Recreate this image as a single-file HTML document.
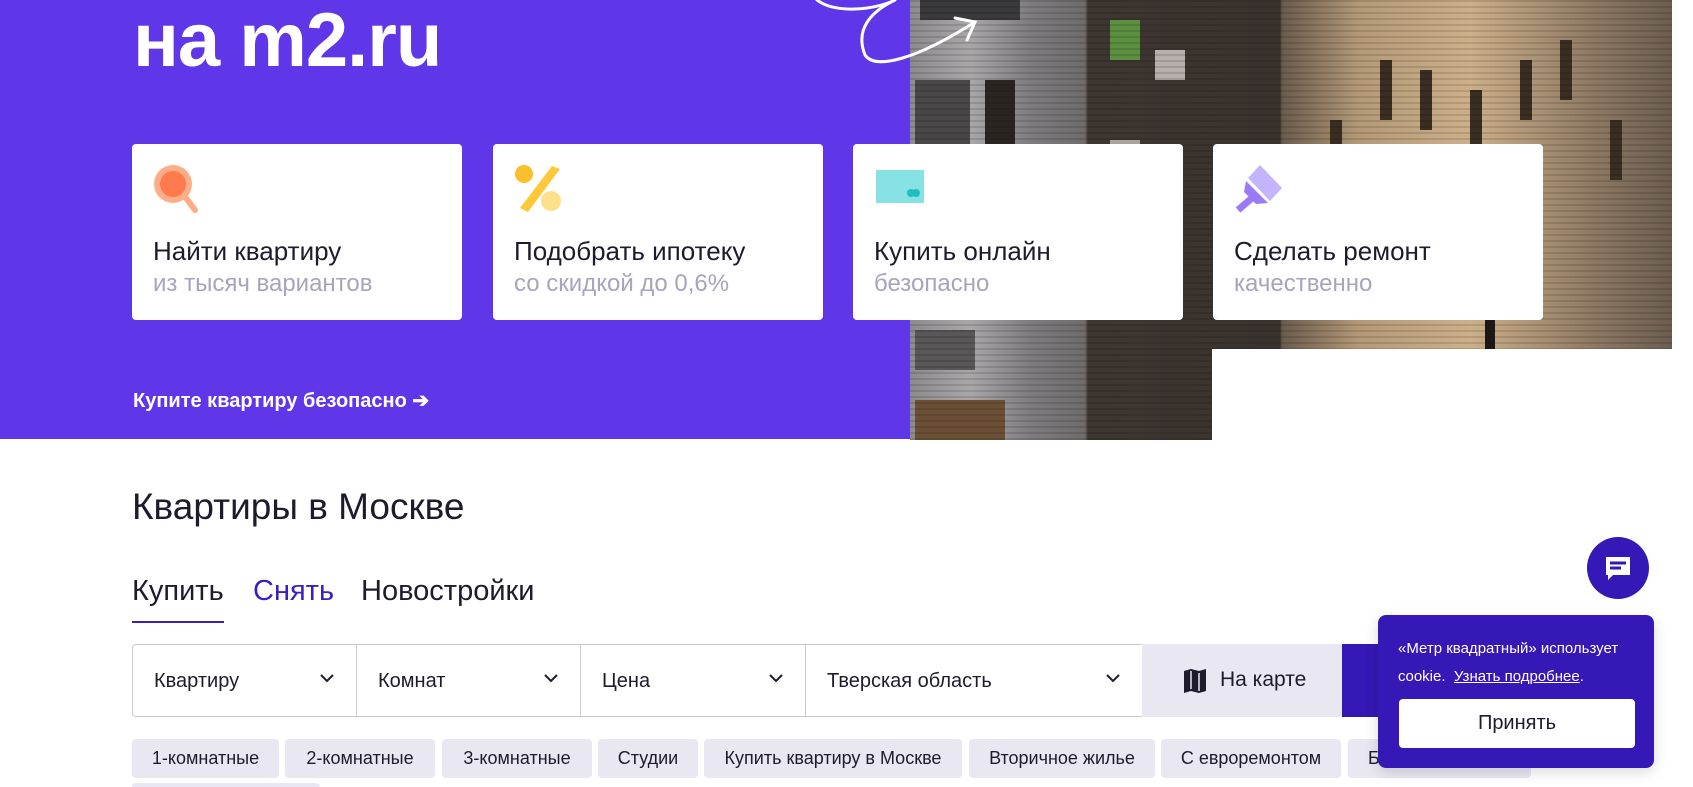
<!DOCTYPE html>
<html style="height:787px;overflow:hidden"><head><meta charset="utf-8">
<style>
*{margin:0;padding:0;box-sizing:border-box}
body{width:1693px;height:787px;overflow:hidden;background:#fff;font-family:"Liberation Sans","Noto Sans CJK SC",sans-serif;position:relative;color:#1d1b2c}
.abs{position:absolute}
.hero{left:0;top:0;width:910px;height:439px;background:#5f37e9}
.photo{left:910px;top:0;width:762px;height:440px;overflow:hidden;
background:
linear-gradient(90deg,#8c8a8d 0,#a9a7a8 60px,#7e7c7f 120px,#6f6b6b 175px,#3e3631 178px,#3a322d 370px,#6a5b4c 372px,#b49a78 450px,#cdb08a 560px,#8f7a64 680px,#6b5d50 762px)}
.photo:after{content:"";position:absolute;inset:0;background:repeating-linear-gradient(180deg,rgba(0,0,0,.12) 0 2px,transparent 2px 6px)}
.photo .win{position:absolute;background:#2b2522}
.white{left:1212px;top:349px;width:481px;height:100px;background:#fff}
.title{left:133px;top:-3px;font-size:76px;font-weight:bold;color:#fff;letter-spacing:-1px}
.card{top:144px;width:330px;height:176px;background:#fff;border-radius:4px}
.card .t{position:absolute;left:21px;top:92px;font-size:26px;color:#1d1b2c;white-space:nowrap}
.card .s{position:absolute;left:21px;top:126px;font-size:24px;color:#a8a4bb;white-space:nowrap}
.card svg{position:absolute;left:21px;top:20px}
.link{left:133px;top:388px;color:#fff;font-size:20px;font-weight:bold}
h2{position:absolute;left:132px;top:486px;font-size:37px;font-weight:normal;color:#1d1b2c}
.tab{top:575px;font-size:29px}
.field{top:644px;height:73px;border:1px solid #cac7dc;background:#fff;font-size:20px;color:#1d1b2c;padding:25px 0 0 21px}
.field svg{position:absolute;right:22px;top:29px}
.chip{top:739px;height:39px;background:#e9e7f2;border-radius:4px;font-size:18px;color:#1d1b2c;text-align:center;line-height:39px;white-space:nowrap;overflow:hidden}
</style></head><body>
<div class="abs hero"></div>
<div class="abs photo">
 <div class="win" style="left:10px;top:0;width:100px;height:20px;background:#3a3a3c"></div>
 <div class="win" style="left:5px;top:80px;width:55px;height:90px;background:#4a4749"></div>
 <div class="win" style="left:75px;top:80px;width:30px;height:90px"></div>
 <div class="win" style="left:5px;top:330px;width:60px;height:40px;background:#5a5758"></div>
 <div class="win" style="left:5px;top:400px;width:90px;height:40px;background:#6b5036"></div>
 <div class="win" style="left:200px;top:20px;width:30px;height:40px;background:#5c9040"></div>
 <div class="win" style="left:245px;top:50px;width:30px;height:30px;background:#b7b0ad"></div>
 <div class="win" style="left:200px;top:140px;width:30px;height:30px;background:#a9a3a0"></div>
 <div class="win" style="left:575px;top:160px;width:10px;height:280px;background:#1c1816"></div>
 <div class="win" style="left:470px;top:60px;width:12px;height:60px;background:#3a2d22"></div>
 <div class="win" style="left:510px;top:70px;width:12px;height:60px;background:#3a2d22"></div>
 <div class="win" style="left:650px;top:40px;width:12px;height:60px;background:#3a2d22"></div>
 <div class="win" style="left:700px;top:120px;width:12px;height:60px;background:#3a2d22"></div>
 <div class="win" style="left:420px;top:120px;width:12px;height:60px;background:#3a2d22"></div>
 <div class="win" style="left:560px;top:90px;width:12px;height:60px;background:#3a2d22"></div>
 <div class="win" style="left:610px;top:60px;width:12px;height:60px;background:#3a2d22"></div>
</div>
<div class="abs white"></div>
<svg class="abs" style="left:815px;top:0" width="170" height="75" viewBox="0 0 170 75"><path d="M2 0 C20 14 60 10 80 0 M80 0 C55 12 40 30 50 55 C60 70 100 60 160 22 M140 18 L160 22 L152 40" fill="none" stroke="#fff" stroke-width="3" stroke-linecap="round"/></svg>
<div class="abs title">на m2.ru</div>

<div class="abs card" style="left:132px"><svg width="52" height="50" viewBox="0 0 52 50"><path d="M30 30 L42 46" stroke="#ffad87" stroke-width="6" stroke-linecap="round"/><circle cx="20" cy="20" r="19" fill="#ffad87"/><circle cx="20" cy="20" r="13" fill="#ff7a4f"/></svg><div class="t">Найти квартиру</div><div class="s">из тысяч вариантов</div></div>
<div class="abs card" style="left:493px"><svg width="52" height="50" viewBox="0 0 52 50"><circle cx="10" cy="10" r="9" fill="#fbbf2c"/><circle cx="37" cy="37" r="10" fill="#ffe08a"/><path d="M38 2 L46 5 L14 48 L6 44 Z" fill="#fbc93a"/></svg><div class="t">Подобрать ипотеку</div><div class="s">со скидкой до 0,6%</div></div>
<div class="abs card" style="left:853px"><svg width="52" height="50" viewBox="0 0 52 50"><rect x="2" y="6" width="48" height="33" fill="#87e2e3"/><circle cx="37" cy="29" r="4" fill="#1fbfc0"/><circle cx="42" cy="29" r="4" fill="#1fbfc0"/></svg><div class="t">Купить онлайн</div><div class="s">безопасно</div></div>
<div class="abs card" style="left:1213px"><svg width="52" height="50" viewBox="0 0 52 50"><path d="M26 1 L48 24 L36 37 L14 14 Z" fill="#c3b4fd"/><path d="M12 17 L34 39 L22 40 L10 28 Z" fill="#9b7af7"/><path d="M18 34 L4 46" stroke="#9b7af7" stroke-width="7"/></svg><div class="t">Сделать ремонт</div><div class="s">качественно</div></div>

<div class="abs link">Купите квартиру безопасно ➔</div>

<h2>Квартиры в Москве</h2>
<div class="abs tab" style="left:132px">Купить</div>
<div class="abs tab" style="left:253px;color:#3a1fc4">Снять</div>
<div class="abs tab" style="left:361px">Новостройки</div>
<div class="abs" style="left:132px;top:621px;width:92px;height:2px;background:#3a1fb0"></div>

<div class="abs field" style="left:132px;width:225px;border-radius:4px 0 0 4px">Квартиру<svg width="14" height="9" viewBox="0 0 14 9"><path d="M1 1 L7 7 L13 1" fill="none" stroke="#1d1b2c" stroke-width="2"/></svg></div>
<div class="abs field" style="left:356px;width:225px">Комнат<svg width="14" height="9" viewBox="0 0 14 9"><path d="M1 1 L7 7 L13 1" fill="none" stroke="#1d1b2c" stroke-width="2"/></svg></div>
<div class="abs field" style="left:580px;width:226px">Цена<svg width="14" height="9" viewBox="0 0 14 9"><path d="M1 1 L7 7 L13 1" fill="none" stroke="#1d1b2c" stroke-width="2"/></svg></div>
<div class="abs field" style="left:805px;width:338px">Тверская область<svg width="14" height="9" viewBox="0 0 14 9"><path d="M1 1 L7 7 L13 1" fill="none" stroke="#1d1b2c" stroke-width="2"/></svg></div>
<div class="abs" style="left:1142px;top:644px;width:200px;height:73px;background:#e9e7f2;font-size:21px;padding:24px 0 0 78px;white-space:nowrap"><svg style="position:absolute;left:41px;top:24px" width="24" height="26" viewBox="0 0 24 26"><path d="M1 3 L8 1 L16 3 L23 1 L23 23 L16 25 L8 23 L1 25 Z" fill="#1d1b2c"/><path d="M8 3 V21 M16 5 V23" stroke="#e9e7f2" stroke-width="1.5"/></svg>На карте</div>
<div class="abs" style="left:1342px;top:644px;width:100px;height:73px;background:#3518b5"></div>

<div class="abs chip" style="left:132px;width:147px">1-комнатные</div>
<div class="abs chip" style="left:285px;width:150px">2-комнатные</div>
<div class="abs chip" style="left:442px;width:150px">3-комнатные</div>
<div class="abs chip" style="left:598px;width:100px">Студии</div>
<div class="abs chip" style="left:704px;width:258px">Купить квартиру в Москве</div>
<div class="abs chip" style="left:969px;width:186px">Вторичное жилье</div>
<div class="abs chip" style="left:1161px;width:180px">С евроремонтом</div>
<div class="abs chip" style="left:1348px;width:183px;text-align:left;padding-left:20px">Без посредников</div>
<div class="abs chip" style="left:132px;top:783px;width:188px;height:4px;border-radius:4px 4px 0 0"></div>

<div class="abs" style="left:1587px;top:537px;width:62px;height:62px;border-radius:50%;background:#3518b5"></div>
<svg class="abs" style="left:1604px;top:555px" width="28" height="28" viewBox="0 0 28 28"><path d="M2 2 H26 V20 H9 L4 25 V20 H2 Z" fill="#fff"/><path d="M6 8 H22 M6 13 H17" stroke="#3518b5" stroke-width="3"/></svg>

<div class="abs" style="left:1378px;top:615px;width:276px;height:153px;background:#3518b5;border-radius:8px;box-shadow:0 4px 14px rgba(0,0,0,.15)"></div>
<div class="abs" style="left:1398px;top:635px;color:#fff;font-size:15px;line-height:28px;white-space:nowrap">«Метр квадратный» использует<br>cookie.&nbsp; <span style="text-decoration:underline">Узнать подробнее</span>.</div>
<div class="abs" style="left:1399px;top:699px;width:236px;height:49px;background:#fff;border-radius:4px;text-align:center;line-height:49px;font-size:20px;color:#1d1b2c">Принять</div>
</body></html>
